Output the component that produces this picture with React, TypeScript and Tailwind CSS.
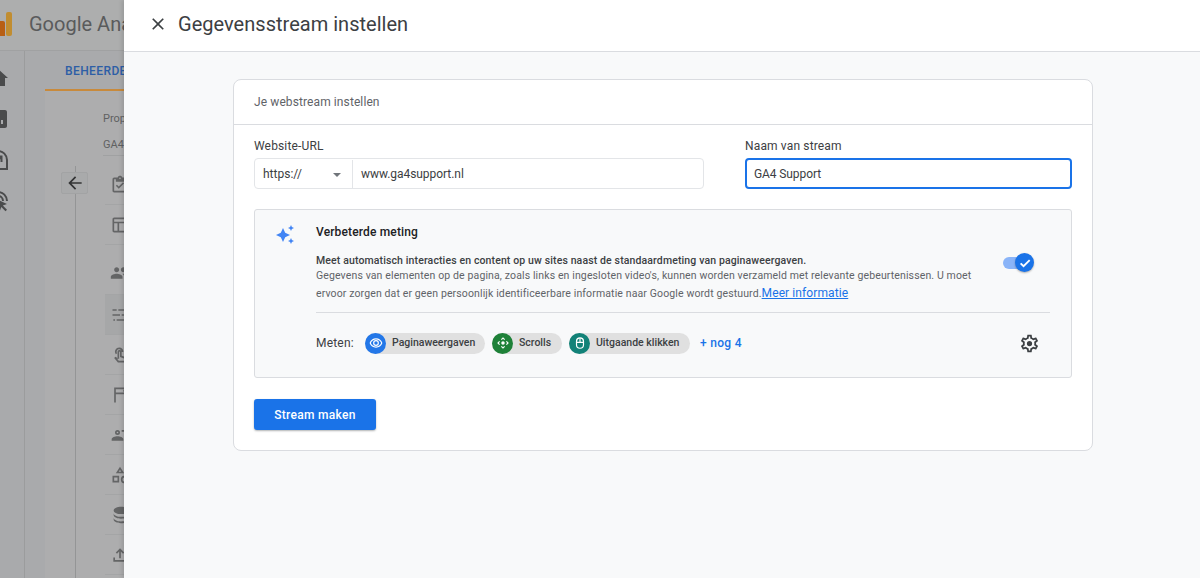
import React from "react";

const P = ({ d, size = 24, className = "" }: { d: string; size?: number; className?: string }) => (
  <svg width={size} height={size} viewBox="0 0 24 24" fill="currentColor" className={className}>
    <path d={d} />
  </svg>
);

const close = "M19 6.41L17.59 5 12 10.59 6.41 5 5 6.41 10.59 12 5 17.59 6.41 19 12 13.41 17.59 19 19 17.59 13.41 12z";
const back = "M20 11H7.83l5.59-5.59L12 4l-8 8 8 8 1.41-1.41L7.83 13H20v-2z";
const gear = "M19.43 12.98c.04-.32.07-.64.07-.98 0-.34-.03-.66-.07-.98l2.11-1.65c.19-.15.24-.42.12-.64l-2-3.46c-.09-.16-.26-.25-.44-.25-.06 0-.12.01-.17.03l-2.49 1c-.52-.4-1.08-.73-1.69-.98l-.38-2.65C14.46 2.18 14.25 2 14 2h-4c-.25 0-.46.18-.49.42l-.38 2.65c-.61.25-1.17.59-1.69.98l-2.49-1c-.06-.02-.12-.03-.18-.03-.17 0-.34.09-.43.25l-2 3.46c-.13.22-.07.49.12.64l2.11 1.65c-.04.32-.07.65-.07.98 0 .33.03.66.07.98l-2.11 1.65c-.19.15-.24.42-.12.64l2 3.46c.09.16.26.25.44.25.06 0 .12-.01.17-.03l2.49-1c.52.4 1.08.73 1.69.98l.38 2.65c.03.24.24.42.49.42h4c.25 0 .46-.18.49-.42l.38-2.65c.61-.25 1.17-.59 1.69-.98l2.49 1c.06.02.12.03.18.03.17 0 .34-.09.43-.25l2-3.46c.12-.22.07-.49-.12-.64l-2.11-1.65zm-1.98-1.71c.04.31.05.52.05.73 0 .21-.02.43-.05.73l-.14 1.13.89.7 1.08.84-.7 1.21-1.27-.51-1.04-.42-.9.68c-.43.32-.84.56-1.25.73l-1.06.43-.16 1.13-.2 1.35h-1.4l-.19-1.35-.16-1.13-1.06-.43c-.43-.18-.83-.41-1.23-.71l-.91-.7-1.06.43-1.27.51-.7-1.21 1.08-.84.89-.7-.14-1.13c-.03-.31-.05-.54-.05-.74s.02-.43.05-.73l.14-1.13-.89-.7-1.08-.84.7-1.21 1.27.51 1.04.42.9-.68c.43-.32.84-.56 1.25-.73l1.06-.43.16-1.13.2-1.35h1.39l.19 1.35.16 1.13 1.06.43c.43.18.83.41 1.23.71l.91.7 1.06-.43 1.27-.51.7 1.21-1.07.85-.89.7.14 1.13zM12 9a3 3 0 1 0 0 6 3 3 0 0 0 0-6z";

const navIcons = [
  "M10 20v-6h4v6h5v-8h3L12 3 2 12h3v8z",
  "M19 3H5c-1.100 0-2 .9-2 2v14c0 1.100.9 2 2 2h14c1.100 0 2-.9 2-2V5c0-1.100-.9-2-2-2zM9 17H7v-7h2v7zm4 0h-2V7h2v10zm4 0h-2v-4h2v4z",
  "M12 2a10 10 0 0 0 0 20h10V12A10 10 0 0 0 12 2zm0 2a8 8 0 0 1 8 8v8h-8a8 8 0 0 1 0-16zM8.500 16.900l6-6v3.100h2V7.500h-6.500v2h3.100l-6 6z",
  "M12 2a10 10 0 0 0-10 10h2a8 8 0 0 1 16 0h2A10 10 0 0 0 12 2zm0 4a6 6 0 0 0-6 6h2a4 4 0 0 1 8 0h2a6 6 0 0 0-6-6zm-2 4l11 5-4.200 1.500L21 20.700 19.500 22.200l-4.200-4.200L13.800 22z",
];

const rows: { h: string; bg?: boolean; d: string; size: number }[] = [
  { h: "h-10", size: 20, d: "M19 3h-4.180C14.400 1.840 13.300 1 12 1s-2.400.84-2.820 2H5c-1.100 0-2 .9-2 2v14c0 1.100.9 2 2 2h14c1.100 0 2-.9 2-2V5c0-1.100-.9-2-2-2zm-7 0c.55 0 1 .45 1 1s-.45 1-1 1-1-.45-1-1 .45-1 1-1zm7 16H5V5h2v3h10V5h2v14zm-8.500-2.500L7 13l1.400-1.400 2.100 2.100 5.100-5.100L17 10z" },
  { h: "h-10", size: 20, d: "M19 3H5c-1.100 0-2 .9-2 2v14c0 1.100.9 2 2 2h14c1.100 0 2-.9 2-2V5c0-1.100-.9-2-2-2zm0 2v3H5V5h14zM5 19v-9h4v9H5zm6 0v-9h8v9h-8z" },
  { h: "h-[50px] pt-[6px]", size: 20, d: "M16 11c1.660 0 3-1.340 3-3s-1.340-3-3-3-3 1.340-3 3 1.340 3 3 3zm-8 0c1.660 0 3-1.340 3-3S9.660 5 8 5 5 6.340 5 8s1.340 3 3 3zm0 2c-2.330 0-7 1.170-7 3.500V19h14v-2.500C15 14.170 10.330 13 8 13zm8 0c-.29 0-.62.020-.97.050 1.160.84 1.970 1.970 1.970 3.450V19h6v-2.500c0-2.330-4.670-3.500-7-3.500z" },
  { h: "h-10", bg: true, size: 20, d: "M3 5h5v2H3zm7 0h11v2H10zM3 11h9v2H3zm11 0h7v2h-7zM4 17h2v2H4zm4 0h9v2H8z" },
  { h: "h-10", size: 20, d: "M11 3a5 5 0 0 0-4 8l1.500-1.200A3 3 0 1 1 14 8.500h2A5 5 0 0 0 11 3zm0 3a2 2 0 0 0-2 2v7.500L6.500 14 5 15.500 9.500 21H19l1-6-6-2V8a2 2 0 0 0-2-2h-1zm0 2h1v6.500l6 2-.5 2.500h-7l-2-2.500H11V8z" },
  { h: "h-10", size: 20, d: "M5 3h15l-2 4 2 4H7v10H5V3zm2 2v4h9.800l-1-2 1-2H7z" },
  { h: "h-10", size: 20, d: "M9 6a3 3 0 1 0 0 6 3 3 0 0 0 0-6zm0 2a1 1 0 1 1 0 2 1 1 0 0 1 0-2zM2 19v-2c0-2 4-3.500 7-3.500s7 1.500 7 3.500v2H2zm12-13h6v2h-6zm3 4h5v2h-5zm0 4h4v2h-4z" },
  { h: "h-10", size: 20, d: "M12 2l5 8H7l5-8zm0 3.800L10.600 8h2.800L12 5.800zM3 13h8v8H3v-8zm2 2v4h4v-4H5zm12.500-2a4.500 4.500 0 1 1 0 9 4.500 4.500 0 0 1 0-9zm0 2a2.500 2.500 0 1 0 0 5 2.500 2.500 0 0 0 0-5z" },
  { h: "h-10", size: 22, d: "M12 3C7.600 3 4 4.800 4 7s3.600 4 8 4 8-1.800 8-4-3.600-4-8-4zM4 10v2c0 2.200 3.600 4 8 4s8-1.800 8-4v-2c0 2.200-3.600 4-8 4s-8-1.800-8-4zm0 5v2c0 2.200 3.600 4 8 4s8-1.800 8-4v-2c0 2.200-3.600 4-8 4s-8-1.800-8-4z" },
  { h: "h-10", size: 20, d: "M11 16V7.850l-2.600 2.600L7 9l5-5 5 5-1.400 1.450-2.600-2.600V16h-2zm-7 4v-5h2v3h12v-3h2v5H4z" },
];

const chips = [
  {
    label: "Paginaweergaven",
    bg: "bg-[#2377e8]",
    w: "w-[120px]",
    icon: "M12 6a9.770 9.770 0 0 1 8.820 6A9.770 9.770 0 0 1 12 18a9.770 9.770 0 0 1-8.820-6A9.770 9.770 0 0 1 12 6zm0-2C7 4 2.730 7.110 1 12c1.730 4.890 6 8 11 8s9.270-3.110 11-8c-1.730-4.890-6-8-11-8zm0 5a3 3 0 1 1 0 6 3 3 0 0 1 0-6zm0-2a5 5 0 1 0 0 10 5 5 0 0 0 0-10z",
  },
  {
    label: "Scrolls",
    bg: "bg-[#1e8138]",
    w: "w-[70px]",
    icon: "M12 2l3.500 3.500-1.400 1.400L12 4.800 9.900 6.900 8.500 5.500 12 2zm0 20l-3.500-3.500 1.400-1.400 2.100 2.100 2.100-2.100 1.400 1.400L12 22zM2 12l3.500-3.500 1.400 1.400L4.800 12l2.100 2.100-1.400 1.400L2 12zm20 0l-3.500 3.500-1.400-1.400 2.100-2.100-2.100-2.100 1.400-1.400L22 12zm-10-3a3 3 0 1 1 0 6 3 3 0 0 1 0-6z",
  },
  {
    label: "Uitgaande klikken",
    bg: "bg-[#128278]",
    w: "w-[121px]",
    icon: "M12 2a7 7 0 0 0-7 7v6a7 7 0 0 0 14 0V9a7 7 0 0 0-7-7zm-1 2.100V10H7.100V9A5 5 0 0 1 11 4.100zm2 0A5 5 0 0 1 16.900 9v1H13V4.100zM7 12h10v3a5 5 0 0 1-10 0v-3z",
  },
];

function Chip({ c }: { c: (typeof chips)[number] }) {
  return (
    <div className={`flex h-[21px] items-center rounded-full bg-[#e0e0e0] ${c.w}`}>
      <span className={`flex h-[21px] w-[21px] shrink-0 items-center justify-center rounded-full text-white ${c.bg}`}>
        <P d={c.icon} size={14} />
      </span>
      <span className="ml-[6px] whitespace-nowrap text-[10.500px] font-medium text-[#3c4043]">{c.label}</span>
    </div>
  );
}

export default function App() {
  return (
    <div
      className="flex h-[578px] w-[1200px] overflow-hidden bg-[#f8f9fa] text-[#3c4043]"
      style={{ fontFamily: "Roboto, 'Noto Sans', sans-serif" }}
    >
      {/* Dimmed page behind the drawer */}
      <div className="flex h-full w-[124px] shrink-0 flex-col overflow-hidden bg-[#a9aaac]">
        <div className="flex h-[51px] shrink-0 items-center border-b border-[#a0a1a2] bg-[#adaeae] pb-[3px]">
          <div className="flex h-[24px] shrink-0 items-end gap-[1px]">
            <span className="h-[15px] w-[5px] rounded-tr-[2px] bg-[#b85f14]" />
            <span className="h-[24px] w-[6px] rounded-[2px] bg-[#c18d30]" />
          </div>
          <span className="ml-[17px] whitespace-nowrap text-[20px] text-[#5a5b5c]">Google Analytics</span>
        </div>
        <div className="flex min-h-0 flex-1">
          <div className="flex w-[25px] shrink-0 flex-col items-start gap-[17px] overflow-hidden border-r border-[#9b9c9d] pt-[15px] text-[#4a4b4c]">
            {navIcons.map((d, n) => (
              <div key={n} className="-ml-[14px] shrink-0">
                <P d={d} size={24} />
              </div>
            ))}
          </div>
          <div className="w-[20px] shrink-0" />
          <div className="flex min-w-0 flex-1 flex-col">
            <div className="flex h-[40px] shrink-0 items-center border-b-2 border-[#c88a3c] pl-[20px] pt-[2px]">
              <span className="whitespace-nowrap text-[12px] font-medium tracking-[0.4px] text-[#2d5ea6]">BEHEERDER</span>
            </div>
            <div className="flex min-h-0 flex-1 bg-[#adadae]">
              <div className="relative flex w-[31px] shrink-0 justify-end pt-[75px]">
                <div className="h-full w-px bg-[#949596]" />
                <div className="absolute left-[16px] top-[81px] flex h-[22px] w-[27px] items-center justify-center rounded-[2px] border border-[#a2a3a4] bg-[#a9aaab] text-[#333435]">
                  <P d={back} size={20} />
                </div>
              </div>
              <div className="flex min-w-0 flex-1 flex-col pl-[27px]">
                <div className="mt-[20px] whitespace-nowrap text-[11px] leading-[16px] text-[#606162]">Property</div>
                <div className="mt-[10px] whitespace-nowrap border-b border-[#a0a1a2] pb-[2px] text-[11px] leading-[16px] text-[#606162]">GA4 - Support</div>
                <div className="ml-[2px] mt-[9px] flex flex-col">
                  {rows.map((r, i) => (
                    <div
                      key={i}
                      className={`flex shrink-0 items-center overflow-hidden border-b border-[#a4a5a6] pl-[5px] text-[#646566] ${r.h} ${r.bg ? "bg-[#a6a7a8]" : ""}`}
                    >
                      <P d={r.d} size={r.size} className="shrink-0" />
                    </div>
                  ))}
                </div>
              </div>
            </div>
          </div>
        </div>
      </div>
      <div className="relative z-10 flex h-full min-w-0 flex-1 flex-col shadow-[-2px_0_4px_rgba(0,0,0,0.12)]">
        <header className="flex h-[52px] shrink-0 items-center border-b border-[#dadce0] bg-white pb-[4px] pl-[24px]">
          <P d={close} size={20} className="text-[#3c4043]" />
          <h1 className="ml-[10px] whitespace-nowrap text-[20px] font-normal tracking-[0.02px] text-[#3c4043]">Gegevensstream instellen</h1>
        </header>
        <main className="min-h-0 flex-1 pl-[109px] pt-[27px]">
          <section className="h-[372px] w-[860px] rounded-[8px] border border-[#dadce0] bg-white">
            <div className="flex h-[45px] items-center border-b border-[#dadce0] pl-[20px] text-[12px] tracking-[0.1px] text-[#5f6368]">
              Je webstream instellen
            </div>
            <div className="px-[20px] pt-[12px]">
              <div className="flex">
                <div className="w-[450px]">
                  <label className="block h-[21px] text-[12px] leading-[18px] tracking-[0.15px] text-[#3c4043]">Website-URL</label>
                  <div className="flex h-[31px] items-center rounded-[4px] border border-[#e3e5e8] pt-[1px] text-[12px]">
                    <div className="flex h-full w-[98px] items-center border-r border-[#e3e5e8] pl-[8px]">
                      <span>https://</span>
                      <span className="ml-[31px] mt-[1px] h-0 w-0 border-x-[4px] border-t-[4px] border-x-transparent border-t-[#70757a]" />
                    </div>
                    <span className="pl-[8px] tracking-[-0.05px]">www.ga4support.nl</span>
                  </div>
                </div>
                <div className="ml-[41px] w-[327px]">
                  <label className="block h-[21px] text-[12px] leading-[18px] tracking-[0.15px] text-[#3c4043]">Naam van stream</label>
                  <div className="flex h-[31px] items-center rounded-[4px] border-2 border-[#1a73e8] pl-[7px] pt-[1px] text-[12px] tracking-[-0.1px]">
                    GA4 Support
                  </div>
                </div>
              </div>
              <div className="mt-[20px] flex h-[169px] w-[818px] rounded-[3px] border border-[#dadce0] bg-[#f8f9fa]">
                <div className="w-[61px] shrink-0 pl-[20px] pt-[14px]">
                  <svg width="21" height="21" viewBox="0 0 21 21" fill="#4285f4">
                    <path d="M8 4l2.200 4.800L15 11l-4.800 2.200L8 18l-2.200-4.800L1 11l4.800-2.200z" />
                    <path d="M16 1l.9 2.100L19 4l-2.100.9L16 7l-.9-2.100L13 4l2.100-.9z" />
                    <path d="M16 14l.9 2.100 2.100.9-2.100.9L16 20l-.9-2.100L13 17l2.100-.9z" />
                  </svg>
                </div>
                <div className="min-w-0 flex-1 pt-[13px]">
                  <h2 className="text-[12px] font-medium leading-[18px] tracking-[0.15px] text-[#202124]">Verbeterde meting</h2>
                  <div className="flex w-[734px] items-start border-b border-[#dadce0] pb-[11px] pt-[12px]">
                    <div className="w-[690px] text-[10.500px] leading-[15px] tracking-[0.125px] text-[#5f6368]">
                      <p className="font-medium text-[#3c4043]">
                        Meet automatisch interacties en content op uw sites naast de standaardmeting van paginaweergaven.
                      </p>
                      <p>
                        Gegevens van elementen op de pagina, zoals links en ingesloten video's, kunnen worden verzameld met relevante gebeurtenissen. U moet
                      </p>
                      <p className="mt-[3px]">
                        ervoor zorgen dat er geen persoonlijk identificeerbare informatie naar Google wordt gestuurd.
                        <a className="text-[12px] tracking-[0.1px] text-[#1a73e8] underline">Meer informatie</a>
                      </p>
                    </div>
                    <div className="relative ml-[-3px] flex h-[20px] w-[31px] shrink-0 items-center">
                      <span className="h-[12px] w-[24px] rounded-full bg-[#8ab4f8]" />
                      <span className="absolute right-0 top-0 flex h-[19px] w-[19px] items-center justify-center rounded-full bg-[#1a73e8] shadow-[0_1px_2px_rgba(0,0,0,0.3)]">
                        <svg width="14" height="14" viewBox="0 0 24 24" fill="none" stroke="white" strokeWidth="3.200">
                          <path d="M4.500 12.500l5 5L20 7" />
                        </svg>
                      </span>
                    </div>
                  </div>
                  <div className="flex w-[734px] items-center pt-[19px]">
                    <span className="w-[49px] text-[12px] tracking-[0.2px] text-[#3c4043]">Meten:</span>
                    <div className="flex items-center gap-[7px]">
                      {chips.map((c) => (
                        <Chip key={c.label} c={c} />
                      ))}
                    </div>
                    <span className="ml-[10px] text-[12px] font-medium tracking-[0.3px] text-[#1a73e8]">+ nog 4</span>
                    <P d={gear} size={21} className="ml-auto mr-[10px] mt-[1px] text-[#3c4043]" />
                  </div>
                </div>
              </div>
              <button className="mt-[21px] flex h-[31px] w-[122px] items-center justify-center rounded-[3px] bg-[#1a73e8] text-[12px] font-medium tracking-[0.3px] text-white shadow-[0_1px_2px_rgba(60,64,67,0.4)]">
                Stream maken
              </button>
            </div>
          </section>
        </main>
      </div>
    </div>
  );
}
